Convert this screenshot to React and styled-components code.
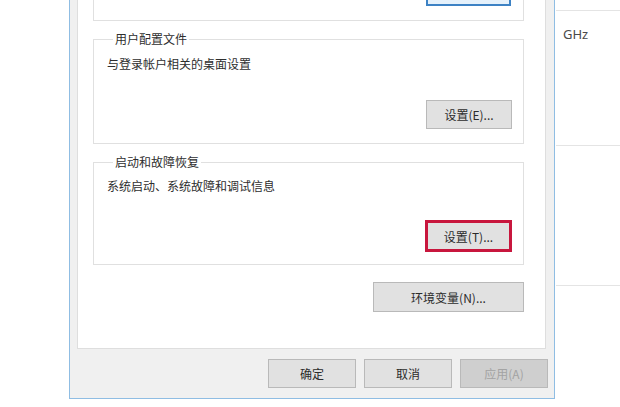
import React from "react";
import styled, { createGlobalStyle } from "styled-components";

const Global = createGlobalStyle`
  html, body { margin: 0; padding: 0; background: #fff; }
  body {
    font-family: "Noto Sans CJK SC", "Noto Sans", sans-serif;
    font-size: 12px;
    color: #2b2b2b;
  }
`;

const Page = styled.div`
  display: flex;
  width: 620px;
  height: 407px;
  overflow: hidden;
  background: #fff;
`;

const Gap = styled.div`
  width: 69px;
  flex: none;
`;

const Dialog = styled.div`
  width: 486px;
  height: 399px;
  flex: none;
  box-sizing: border-box;
  border: 1px solid #8fbde3;
  border-top: none;
  background: #f0f0f0;
  display: flex;
  flex-direction: column;
`;

const TabPanel = styled.div`
  margin: 0 8px 0 7px;
  height: 349px;
  box-sizing: border-box;
  background: #fff;
  border: 1px solid #dedede;
  border-top: none;
  padding: 0 21px 0 15px;
  display: flex;
  flex-direction: column;
`;

const TopGroup = styled.div`
  height: 21px;
  box-sizing: border-box;
  border: 1px solid #e0e0e0;
  border-top: none;
  display: flex;
  justify-content: flex-end;
  align-items: flex-start;
  padding-right: 12px;
`;

const DefaultButtonTail = styled.div`
  width: 85px;
  height: 6px;
  box-sizing: border-box;
  border: 2px solid #3d82c4;
  border-top: none;
  background: #e5f1fb;
`;

const Group = styled.fieldset`
  margin: ${p => p.$top}px 0 0 0;
  padding: 0 11px ${p => p.$bottom}px 13px;
  border: 1px solid #e0e0e0;
  min-width: 0;
  display: flex;
  flex-direction: column;
`;

const Legend = styled.legend`
  margin-left: 6px;
  padding: 0 2px;
  font-size: 12px;
  line-height: 16px;
  color: #2e2e2e;
`;

const Desc = styled.div`
  margin-top: ${p => p.$top}px;
  line-height: 16px;
  color: #2e2e2e;
`;

const Button = styled.div`
  box-sizing: border-box;
  width: ${p => p.$w}px;
  height: ${p => p.$h || 29}px;
  border: ${p => (p.$focus ? "3px solid #c8163d" : "1px solid #b9b9b9")};
  background: ${p => (p.$disabled ? "#cfcfcf" : "#e1e1e1")};
  color: ${p => (p.$disabled ? "#a3a3a3" : "#2b2b2b")};
  display: flex;
  align-items: center;
  justify-content: center;
  font-size: 12px;
  flex: none;
`;

const RightButton = styled(Button)`
  align-self: flex-end;
  margin-top: ${p => p.$top}px;
`;

const Footer = styled.div`
  display: flex;
  justify-content: flex-end;
  gap: 8px;
  padding: 10px 6px 0 0;
`;

const Behind = styled.div`
  flex: 1;
  display: flex;
  flex-direction: column;
  padding-left: 1px;
`;

const InfoRow = styled.div`
  height: ${p => p.$h}px;
  box-sizing: border-box;
  border-bottom: 1px solid #e4e4e4;
  padding: ${p => p.$pad || 0}px 0 0 7px;
  font-family: "Noto Sans", "Open Sans", sans-serif;
  font-size: 13px;
  line-height: 16px;
  color: #4a4a4a;
`;

export default function App() {
  return (
    <>
      <Global />
      <Page>
        <Gap />
        <Dialog>
          <TabPanel>
            <TopGroup>
              <DefaultButtonTail />
            </TopGroup>
            <Group $top={10} $bottom={14}>
              <Legend>用户配置文件</Legend>
              <Desc $top={9}>与登录帐户相关的桌面设置</Desc>
              <RightButton $w={86} $h={29} $top={28}>设置(E)...</RightButton>
            </Group>
            <Group $top={10} $bottom={12}>
              <Legend>启动和故障恢复</Legend>
              <Desc $top={8}>系统启动、系统故障和调试信息</Desc>
              <RightButton $w={87} $h={32} $top={26} $focus>设置(T)...</RightButton>
            </Group>
            <RightButton $w={151} $h={30} $top={17}>环境变量(N)...</RightButton>
          </TabPanel>
          <Footer>
            <Button $w={88}>确定</Button>
            <Button $w={88}>取消</Button>
            <Button $w={88} $disabled>应用(A)</Button>
          </Footer>
        </Dialog>
        <Behind>
          <InfoRow $h={11} />
          <InfoRow $h={135} $pad={15}>GHz</InfoRow>
          <InfoRow $h={140} />
        </Behind>
      </Page>
    </>
  );
}
